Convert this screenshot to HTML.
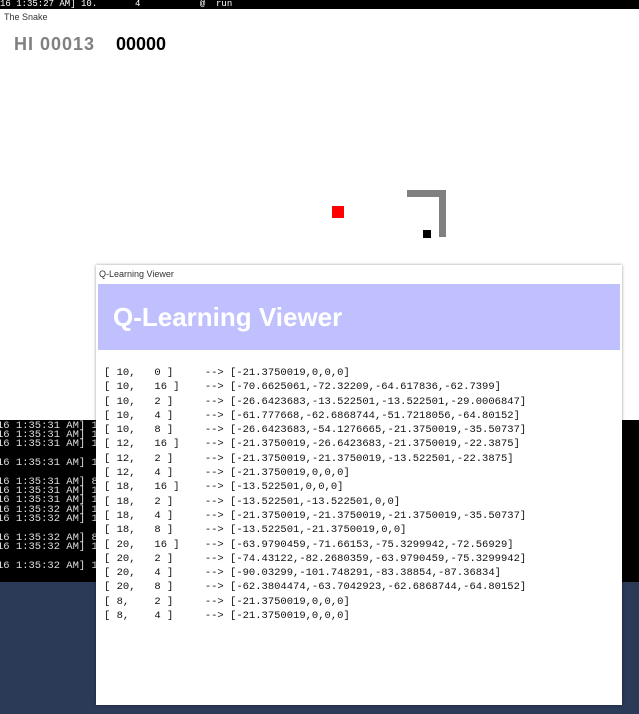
<!DOCTYPE html>
<html><head><meta charset="utf-8"><style>
*{margin:0;padding:0}
body{width:639px;height:714px;overflow:hidden;position:relative;background:#2b3a57;font-family:"Liberation Sans",sans-serif}
.top{position:absolute;left:0;top:0;width:639px;height:9px;background:#000;color:#fff;font:9px/9px "Liberation Mono",monospace;white-space:pre;overflow:hidden}
.snake{position:absolute;left:0;top:9px;width:639px;height:411px;background:#fff}
.cons{position:absolute;left:0;top:420px;width:639px;height:162px;background:#000;color:#ddd;font:10.5px "Liberation Mono",monospace;white-space:pre}
.cons div{position:absolute;left:-3px}
.view{position:absolute;left:96px;top:265px;width:526px;height:440px;background:#fff;box-shadow:0 0 3px rgba(0,0,0,.4)}
.hdr{position:absolute;left:2px;top:19px;width:522px;height:66px;background:#c0c0ff;color:#fff;font-weight:bold;font-size:26px;line-height:66px;padding-left:15px;box-sizing:border-box}
pre{position:absolute;left:8px;top:101px;font:10.5px/14.3px "Liberation Mono",monospace;color:#111}
</style></head><body>
<div class="top">16 1:35:27 AM] 10.       4           @  run</div>
<div class="snake">
<div style="position:absolute;left:4px;top:3px;font-size:9px;color:#333">The Snake</div>
<div style="position:absolute;left:14px;top:25px;font-size:18px;font-weight:bold;color:#808080;letter-spacing:1px">HI 00013</div>
<div style="position:absolute;left:116px;top:25px;font-size:18px;font-weight:bold;color:#000">00000</div>
<div style="position:absolute;left:332px;top:197px;width:12px;height:12px;background:#f00"></div>
<div style="position:absolute;left:407px;top:181px;width:39px;height:7px;background:#808080"></div>
<div style="position:absolute;left:439px;top:181px;width:7px;height:47px;background:#808080"></div>
<div style="position:absolute;left:423px;top:221px;width:8px;height:8px;background:#000"></div>
</div>
<div class="cons">
<div style="top:0">16 1:35:31 AM] 1</div>
<div style="top:9px">16 1:35:31 AM] 1</div>
<div style="top:18px">16 1:35:31 AM] 1</div>
<div style="top:37px">16 1:35:31 AM] 1</div>
<div style="top:56px">16 1:35:31 AM] 8</div>
<div style="top:65px">16 1:35:31 AM] 1</div>
<div style="top:74px">16 1:35:31 AM] 1</div>
<div style="top:84px">16 1:35:32 AM] 1</div>
<div style="top:93px">16 1:35:32 AM] 1</div>
<div style="top:112px">16 1:35:32 AM] 8</div>
<div style="top:121px">16 1:35:32 AM] 1</div>
<div style="top:140px">16 1:35:32 AM] 1</div>
</div>
<div class="view">
<div style="position:absolute;left:3px;top:4px;font-size:9px;color:#333">Q-Learning Viewer</div>
<div class="hdr">Q-Learning Viewer</div>
<pre>[ 10,   0 ]     --> [-21.3750019,0,0,0]
[ 10,   16 ]    --> [-70.6625061,-72.32209,-64.617836,-62.7399]
[ 10,   2 ]     --> [-26.6423683,-13.522501,-13.522501,-29.0006847]
[ 10,   4 ]     --> [-61.777668,-62.6868744,-51.7218056,-64.80152]
[ 10,   8 ]     --> [-26.6423683,-54.1276665,-21.3750019,-35.50737]
[ 12,   16 ]    --> [-21.3750019,-26.6423683,-21.3750019,-22.3875]
[ 12,   2 ]     --> [-21.3750019,-21.3750019,-13.522501,-22.3875]
[ 12,   4 ]     --> [-21.3750019,0,0,0]
[ 18,   16 ]    --> [-13.522501,0,0,0]
[ 18,   2 ]     --> [-13.522501,-13.522501,0,0]
[ 18,   4 ]     --> [-21.3750019,-21.3750019,-21.3750019,-35.50737]
[ 18,   8 ]     --> [-13.522501,-21.3750019,0,0]
[ 20,   16 ]    --> [-63.9790459,-71.66153,-75.3299942,-72.56929]
[ 20,   2 ]     --> [-74.43122,-82.2680359,-63.9790459,-75.3299942]
[ 20,   4 ]     --> [-90.03299,-101.748291,-83.38854,-87.36834]
[ 20,   8 ]     --> [-62.3804474,-63.7042923,-62.6868744,-64.80152]
[ 8,    2 ]     --> [-21.3750019,0,0,0]
[ 8,    4 ]     --> [-21.3750019,0,0,0]</pre>
</div>
</body></html>
